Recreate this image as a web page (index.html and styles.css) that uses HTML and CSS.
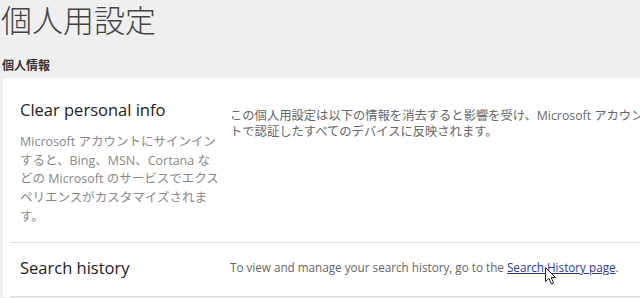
FILE: index.html
```html
<!DOCTYPE html>
<html lang="ja">
<head>
    <meta charset="UTF-8">
    <meta name="viewport" content="width=device-width, initial-scale=1.0">
    <title>個人用設定</title>
    <link rel="stylesheet" href="styles.css">
</head>
<body>
    <h1 class="page-title">個人用設定</h1>
    <h2 class="section-title">個人情報</h2>

    <div class="panel">
        <div class="row row-clear">
            <div class="row-left">
                <h3 class="row-title">Clear personal info</h3>
                <p class="row-desc">Microsoft アカウントにサインインすると、Bing、MSN、Cortana などの Microsoft のサービスでエクスペリエンスがカスタマイズされます。</p>
            </div>
            <div class="row-right">
                <p class="info info-wide">この個人用設定は以下の情報を消去すると影響を受け、Microsoft アカウントで認証したすべてのデバイスに反映されます。</p>
            </div>
        </div>

        <div class="row row-search">
            <div class="row-left">
                <h3 class="row-title">Search history</h3>
            </div>
            <div class="row-right">
                <p class="info info-en">To view and manage your search history, go to the <a href="#" class="link">Search History page</a>.</p>
            </div>
            <svg class="cursor" width="12" height="19" viewBox="0 0 12 19">
                <path d="M0.5 0.5 L0.5 14.5 L4 11.3 L6.4 17 L8.6 16 L6.2 10.5 L10.5 10.5 Z" fill="#fff" stroke="#222" stroke-width="1"/>
            </svg>
        </div>
    </div>
</body>
</html>
```

FILE: styles.css
```css
/* Personal settings page */
body {
    font-family: "Segoe UI", "Open Sans", "Noto Sans CJK JP", sans-serif;
    margin: 0;
    padding: 0;
    background-color: #efefef;
    color: #333;
    overflow: hidden;
}

.page-title {
    font-family: "Noto Sans CJK JP", sans-serif;
    font-weight: 300;
    font-size: 31px;
    line-height: 37px;
    color: #444;
    margin: 0;
    padding: 0 0 0 1px;
}

.section-title {
    font-family: "Noto Sans CJK JP", sans-serif;
    font-size: 12px;
    font-weight: bold;
    line-height: 16px;
    color: #333;
    margin: 20px 0 0 0;
    padding-left: 2px;
    height: 21px;
}

.panel {
    background: #fff;
    margin-left: 3px;
    padding-left: 7px;
}

.row {
    display: flex;
    border-bottom: 1px solid #ddd;
}

.row-clear {
    height: 164px;
}

.row-search {
    position: relative;
    height: 53px;
    align-items: center;
}

.row-left {
    width: 201px;
    padding-left: 10px;
    margin-right: 9px;
    flex-shrink: 0;
}

.row-clear .row-left {
    padding-top: 20px;
}

.row-clear .row-right {
    padding-top: 30px;
}

.row-search .row-left {
    padding-bottom: 4px;
}

.row-search .row-right {
    padding-bottom: 3px;
}

.row-title {
    font-size: 16.5px;
    font-weight: normal;
    color: #222;
    margin: 0;
    line-height: 24px;
}

.row-desc {
    font-size: 12.5px;
    color: #888;
    line-height: 18.7px;
    margin: 11px 0 0 0;
}

.row-right {
    flex: 1;
    min-width: 0;
}

.info {
    font-size: 12.3px;
    color: #666;
    line-height: 15.5px;
    margin: 0;
}

.info-wide {
    width: 414px;
}

.info-en {
    font-size: 11.7px;
    white-space: nowrap;
}

.link {
    color: #2a3b8f;
    text-decoration: underline;
}

.cursor {
    position: absolute;
    left: 535px;
    top: 24px;
}
```
